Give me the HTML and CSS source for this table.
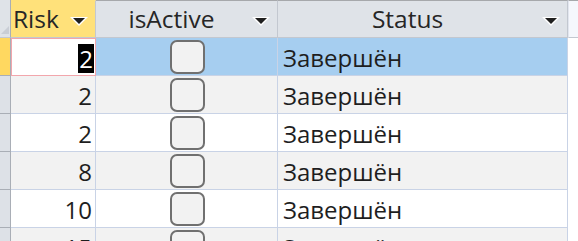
FILE: index.html
```html
<!DOCTYPE html>
<html>
<head>
<meta charset="utf-8">
<link rel="stylesheet" href="styles.css">
</head>
<body>
<div class="sheet">
  <div class="row head">
    <div class="sel corner"><svg width="10" height="10" viewBox="0 0 10 10"><polygon points="9,1 9,9 1,9" fill="#c9ced6"/></svg></div>
    <div class="cell hcell risk-h active-h"><span>Risk</span><svg class="arr" width="18" height="10" viewBox="0 0 18 10"><polygon points="0,0 18,0 9,9" fill="#fff"/><polygon points="3,1 15,1 9,7" fill="#1f1f1f"/></svg></div>
    <div class="cell hcell center"><span>isActive</span><svg class="arr" width="18" height="10" viewBox="0 0 18 10"><polygon points="0,0 18,0 9,9" fill="#fff"/><polygon points="3,1 15,1 9,7" fill="#1f1f1f"/></svg></div>
    <div class="cell hcell center"><span>Status</span><svg class="arr" width="18" height="10" viewBox="0 0 18 10"><polygon points="0,0 18,0 9,9" fill="#fff"/><polygon points="3,1 15,1 9,7" fill="#1f1f1f"/></svg></div>
    <div class="cell hcell rest"></div>
  </div>

  <div class="row current">
    <div class="sel sel-cur"></div>
    <div class="cell num focus"><span class="hl">2</span></div>
    <div class="cell chk"><span class="box"></span></div>
    <div class="cell txt">Завершён</div>
    <div class="cell rest"></div>
  </div>
  <div class="row alt">
    <div class="sel"></div>
    <div class="cell num">2</div>
    <div class="cell chk"><span class="box"></span></div>
    <div class="cell txt">Завершён</div>
    <div class="cell rest"></div>
  </div>
  <div class="row">
    <div class="sel"></div>
    <div class="cell num">2</div>
    <div class="cell chk"><span class="box"></span></div>
    <div class="cell txt">Завершён</div>
    <div class="cell rest"></div>
  </div>
  <div class="row alt">
    <div class="sel"></div>
    <div class="cell num">8</div>
    <div class="cell chk"><span class="box"></span></div>
    <div class="cell txt">Завершён</div>
    <div class="cell rest"></div>
  </div>
  <div class="row">
    <div class="sel"></div>
    <div class="cell num">10</div>
    <div class="cell chk"><span class="box"></span></div>
    <div class="cell txt">Завершён</div>
    <div class="cell rest"></div>
  </div>
  <div class="row alt">
    <div class="sel"></div>
    <div class="cell num">15</div>
    <div class="cell chk"><span class="box"></span></div>
    <div class="cell txt">Завершён</div>
    <div class="cell rest"></div>
  </div>
</div>
</body>
</html>
```
FILE: styles.css
```css
html, body {
  margin: 0;
  padding: 0;
  background: #ffffff;
  overflow: hidden;
}
body {
  width: 578px;
  height: 241px;
  font-family: "Open Sans", "Noto Sans", sans-serif;
  color: #1e1e1e;
}
.sheet {
  display: flex;
  flex-direction: column;
  height: 241px;
  overflow: hidden;
}
.row {
  display: grid;
  grid-template-columns: 11px 85px 182px 290px 1fr;
  height: 38px;
  flex: none;
  background: #ffffff;
}
.row.alt { background: #f2f2f2; }
.row.current { background: #a6cef0; }
.sel {
  background: #dde1e7;
  border-right: 1px solid #a9aeb6;
  border-bottom: 1px solid #a9aeb6;
  box-sizing: border-box;
}
.sel-cur { background: #ffd860; }
.corner {
  display: flex;
  align-items: flex-end;
  justify-content: flex-end;
  padding-bottom: 2px;
}
.cell {
  box-sizing: border-box;
  border-right: 1px solid #c9d3e6;
  border-bottom: 1px solid #c9d3e6;
  display: flex;
  align-items: center;
  font-size: 24px;
  line-height: 1;
  padding-top: 3px;
}
.head .cell {
  background: #dfe3e8;
  border-top: 1px solid #a6a8ab;
  border-bottom: 1px solid #c3c8d0;
  border-right: 1px solid #c3c8d0;
  font-size: 24.5px;
  color: #262626;
  padding-top: 1px;
}
.head .sel { background: #dfe3e8; border-bottom-color: #c3c8d0; }
.head .active-h {
  background: #ffe17a;
  border-top-color: #ffe17a;
}
.hcell { position: relative; }
.risk-h span { margin-left: 2px; }
.center { justify-content: center; }
.center span { margin-right: 30px; }
.arr {
  position: absolute;
  top: 16px;
  right: 7px;
}
.head .rest {
  background: #f5f7fc;
  border-left: 1px solid #e2e6ef;
  border-right: none;
}
.rest { border-right: none; border-bottom: none; background: #ffffff; }
.num {
  justify-content: flex-end;
  padding-right: 3px;
}
.focus {
  background: #ffffff;
  border: 1px solid #f2a6ac;
  padding-right: 1px;
}
.hl {
  background: #000;
  color: #fff;
  padding: 3px 1px 2px 1px;
}
.chk { justify-content: center; padding-left: 1px; padding-top: 0; }
.box {
  width: 31px;
  height: 30px;
  border: 2px solid #707070;
  border-radius: 7px;
  background: #f2f2f2;
}
.txt { padding-left: 5px; }
```
